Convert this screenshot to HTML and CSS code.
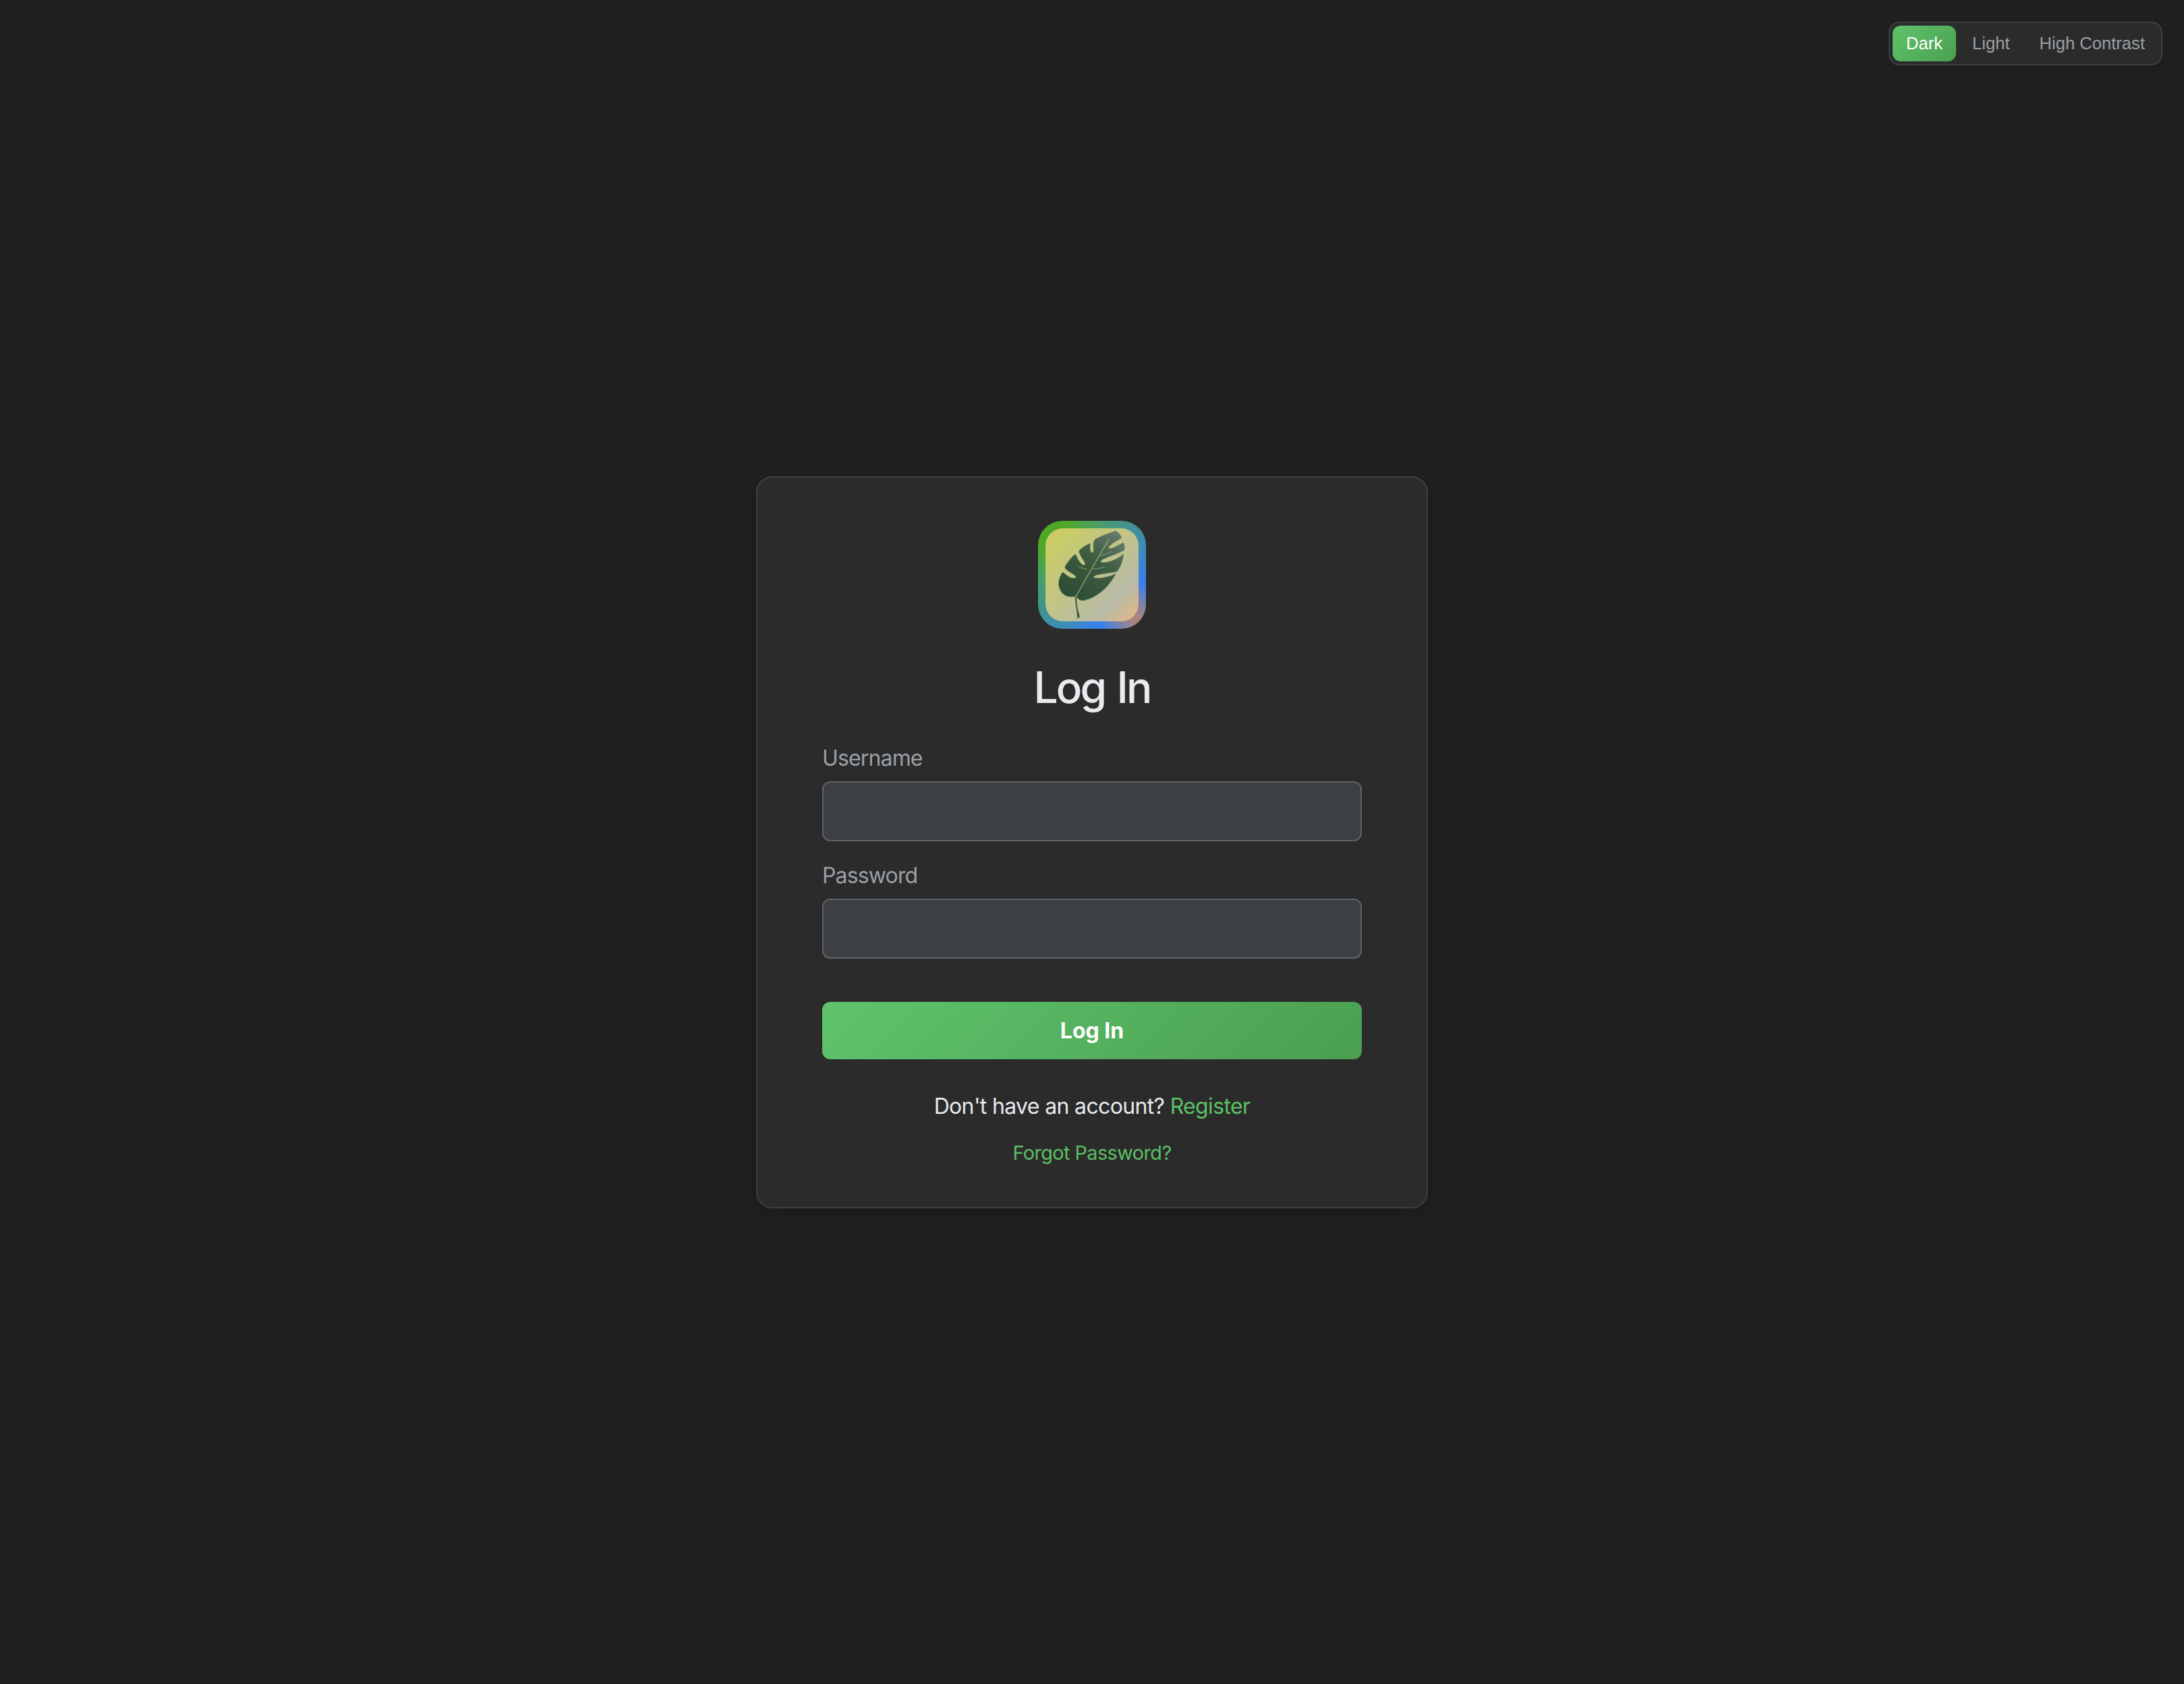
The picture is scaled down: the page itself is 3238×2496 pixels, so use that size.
FILE: index.html
```html
<!DOCTYPE html>
<html>
  <head>
    <meta charset="UTF-8" />
    <title>Log In</title>
    <link rel="stylesheet" href="styles.css">
  </head>
  <body>
    <!-- theme switcher sits over the page corner -->
    <div class="theme-toggle">
      <button type="button" class="theme-btn active">Dark</button>
      <button type="button" class="theme-btn">Light</button>
      <button type="button" class="theme-btn">High Contrast</button>
    </div>

    <div class="card">
      <div class="logo">
        <div class="logo-inner">
          <svg class="leaf" viewBox="150 94 417 417">
            <defs>
              <linearGradient id="leaf-fill" x1="0.8" y1="0" x2="0.3" y2="0.85">
                <stop offset="0" stop-color="#64796a" />
                <stop offset="0.4" stop-color="#3f5c42" />
                <stop offset="1" stop-color="#2d4c32" />
              </linearGradient>
            </defs>
            <path class="leaf-shape" d="M282 400 C250 406 222 396 211 358 C204 332 214 310 224 294 C228 288 232 292 238 298 C252 312 280 324 286 313 C288 303 262 298 240 276 C234 270 238 262 244 254 C254 240 266 226 276 216 C282 208 286 210 290 220 C298 240 316 264 326 257 C332 249 312 232 302 206 C298 196 300 192 308 186 C320 176 336 168 346 163 C352 160 352 164 351 172 C348 188 354 206 362 203 C369 195 361 172 366 154 C368 146 372 144 382 138 C408 124 436 116 465 105 C476 112 486 122 491 133 C492 138 488 140 482 144 C460 156 436 170 433 182 C440 192 476 170 494 160 C500 156 502 160 503 168 C505 176 506 184 503 192 C470 212 400 230 397 243 C405 255 470 238 494 212 C500 206 500 212 499 220 C496 244 486 268 471 288 C440 296 370 300 366 312 C372 322 430 316 466 296 C440 350 390 400 330 416 C312 421 298 416 290 402 C288 430 296 462 304 490 L293 499 C292 470 285 440 282 400 Z" />
            <path class="leaf-rib" d="M435 143 C395 210 330 320 285 402" />
            <path class="leaf-vein" d="M395 216 C412 212 430 206 446 198" />
            <path class="leaf-vein" d="M296 266 C310 272 322 276 336 278" />
            <path class="leaf-vein" d="M360 276 C378 276 398 273 415 267" />
          </svg>
        </div>
      </div>

      <h1 class="title">Log In</h1>

      <form class="login-form" onsubmit="return false">
        <div class="field">
          <label class="field-label" for="username">Username</label>
          <input type="text" class="field-input" id="username">
        </div>
        <div class="field">
          <label class="field-label" for="password">Password</label>
          <input type="password" class="field-input" id="password">
        </div>
        <button type="submit" class="submit-btn">Log In</button>
      </form>

      <p class="register">Don't have an account? <a href="#">Register</a></p>
      <p class="forgot"><a href="#">Forgot Password?</a></p>
    </div>
  </body>
</html>
```

FILE: styles.css
```css
body, html {
    margin: 0;
    padding: 0;
    height: 100%;
}

body {
    display: flex;
    justify-content: center;
    align-items: center;
    background-color: #202020;
    font-family: Inter, "Liberation Sans", sans-serif;
}

.theme-toggle {
    position: absolute;
    top: 32px;
    right: 32px;
    display: flex;
    gap: 4px;
    padding: 4px;
    background-color: #2b2b2b;
    border: 2px solid #3c4043;
    border-radius: 16px;
    box-shadow: 0 4px 16px rgba(0, 0, 0, 0.2);
}

.theme-btn {
    height: 53px;
    padding: 0 20px;
    border: none;
    border-radius: 12px;
    background: none;
    color: #9aa0a6;
    font-family: "Liberation Sans", Arial, sans-serif;
    font-size: 25.6px;
    cursor: pointer;
}

.theme-btn.active {
    background: linear-gradient(135deg, #5fc46c, #4a9f50);
    color: #fff;
}

.card {
    box-sizing: border-box;
    width: 996px;
    padding: 64px 96px 63px;
    background-color: #2b2b2b;
    border: 2px solid #3c4043;
    border-radius: 24px;
    box-shadow: 0 8px 32px rgba(0, 0, 0, 0.2);
}

.logo {
    box-sizing: border-box;
    width: 160px;
    height: 160px;
    margin: 0 auto 48px;
    padding: 11px;
    border-radius: 36px;
    background: conic-gradient(#4ea05a 0deg, #4090a0 45deg, #3880f0 100deg, #b08478 135deg, #3880f0 170deg, #4090a0 225deg, #46a060 270deg, #4ca825 300deg, #4ca825 330deg, #4ea05a 360deg);
}

.logo-inner {
    width: 100%;
    height: 100%;
    border-radius: 26px;
    background: linear-gradient(135deg, #c9cc66 10%, #c2c586 45%, #b8baa8 76%, #dcb98a 94%);
}

.leaf {
    display: block;
    width: 100%;
    height: 100%;
}

.leaf-shape {
    fill: url(#leaf-fill);
    stroke: #7f9f70;
    stroke-width: 3;
    stroke-opacity: 0.7;
}

.leaf-rib {
    fill: none;
    stroke: #8fae7c;
    stroke-width: 4;
}

.leaf-vein {
    fill: none;
    stroke: #8fae7c;
    stroke-width: 2.5;
}

.title {
    margin: 0 0 47px;
    color: #e8eaed;
    font-size: 64px;
    font-weight: 500;
    line-height: 77px;
    letter-spacing: -2.9px;
    word-spacing: 3px;
    text-align: center;
}

.field {
    margin-bottom: 31px;
}

.field-label {
    display: block;
    margin-bottom: 15px;
    color: #9aa0a6;
    font-size: 32px;
    line-height: 39px;
    letter-spacing: -0.85px;
}

.field-input {
    display: block;
    box-sizing: border-box;
    width: 100%;
    height: 89px;
    background-color: #3c4043;
    border: 2px solid #5f6368;
    border-radius: 12px;
}

.submit-btn {
    display: block;
    width: 100%;
    height: 85px;
    margin-top: 64px;
    border: none;
    border-radius: 12px;
    background: linear-gradient(135deg, #5fc46c, #4a9f50);
    color: #fff;
    font-family: Inter, sans-serif;
    font-size: 32px;
    font-weight: 700;
    cursor: pointer;
}

.register {
    margin: 50px 0 0;
    color: #e8eaed;
    font-size: 32px;
    line-height: 39px;
    letter-spacing: -0.65px;
    text-align: center;
}

.forgot {
    margin: 32px 0 0;
    font-size: 28.8px;
    line-height: 35px;
    letter-spacing: -0.55px;
    text-align: center;
}

a {
    color: #5cc062;
    text-decoration: none;
}
```
